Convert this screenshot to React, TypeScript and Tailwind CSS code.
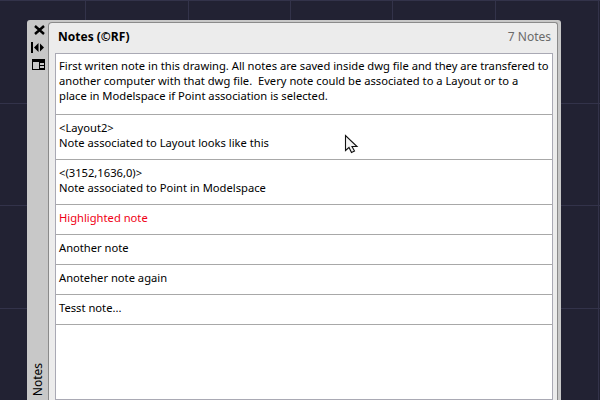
const font = { fontFamily: '"Noto Sans", sans-serif' };

function Row({ className = "text-black", children }: { className?: string; children: React.ReactNode }) {
  return <div className={`whitespace-nowrap border-b border-[#a8a8a8] pl-[3px] pr-[2px] text-[11.2px] leading-[15px] ${className}`}>{children}</div>;
}

export default function App() {
  return (
    <div className="relative h-[400px] w-[600px] overflow-hidden bg-[#222233]" style={font}>
      {["left-[85px]", "left-[188px]", "left-[290px]", "left-[392px]", "left-[495px]", "left-[598px]"].map((c) => (
        <div key={c} className={`absolute top-0 h-full w-px bg-[#33334a] ${c}`} />
      ))}
      {["top-0", "top-[103px]", "top-[205px]", "top-[308px]"].map((c) => (
        <div key={c} className={`absolute left-0 h-px w-full bg-[#33334a] ${c}`} />
      ))}
      <div className="absolute left-[27px] top-[20px] flex h-[380px] w-[534px] rounded-tl-[3px] rounded-tr-[3px] bg-[#c8c8c8] pt-[2px] pr-[3px]">
        <div className="-mt-[2px] flex w-[21px] flex-col items-center pt-[5px]">
          <svg width="13" height="10" viewBox="0 0 13 10" className="ml-[4px]"><path d="M2 1l9 8M11 1l-9 8" stroke="#000" strokeWidth="2.4" /></svg>
          <svg width="13" height="11" viewBox="0 0 13 11" className="mt-[7px] -ml-[1px]"><path d="M1 0v11" stroke="#000" strokeWidth="2" /><path d="M3 5.5l4.5-4.5v9zM13 5.5l-4-4v8z" fill="#000" /></svg>
          <svg width="13" height="11" viewBox="0 0 13 11" className="mt-[6px] ml-[1px]"><path d="M0 0h13v11H0z" fill="#000" /><path d="M1 3h6v7H1zM8 4h4v2H8zM8 7h4v2H8z" fill="#c8c8c8" /></svg>
          <div className="mt-auto mb-[4px] rotate-180 text-[12px] leading-[16px] text-black [writing-mode:vertical-rl]">Notes</div>
        </div>
        <div className="flex min-w-0 flex-1 flex-col rounded-tl-[4px] rounded-tr-[3px] border-l border-r border-t border-[#8a8a8a] bg-[#ececec] pl-[6px] pr-[4px]">
          <div className="flex h-[30px] shrink-0 items-center justify-between pb-[2px] pl-[3px] pr-[2px]">
            <span className="text-[12px] font-bold text-black">Notes (©RF)</span>
            <span className="text-[12px] text-[#6a6a6a]">7 Notes</span>
          </div>
          <div className="flex-1 border border-[#a9a9b4] bg-white">
            <Row className="h-[61px] pt-[4px] text-black">First writen note in this drawing. All notes are saved inside dwg file and they are transfered to<br />another computer with that dwg file.&nbsp; Every note could be associated to a Layout or to a<br />place in Modelspace if Point association is selected.</Row>
            <Row className="h-[45px] pt-[5px] text-black">&lt;Layout2&gt;<br />Note associated to Layout looks like this</Row>
            <Row className="h-[45px] pt-[5px] text-black">&lt;(3152,1636,0)&gt;<br />Note associated to Point in Modelspace</Row>
            <Row className="h-[30px] pt-[5px] text-[#f00014]">Highlighted note</Row>
            <Row className="h-[30px] pt-[5px] text-black">Another note</Row>
            <Row className="h-[30px] pt-[5px] text-black">Anoteher note again</Row>
            <Row className="h-[30px] pt-[5px] text-black">Tesst note...</Row>
          </div>
        </div>
      </div>
      <svg width="16" height="22" viewBox="0 0 16 22" className="absolute left-[344px] top-[134px]">
        <path d="M1.5 1.5v15l3.5-3 2.5 5 3-1.5-2.5-4.5H13z" fill="#f4f4f4" stroke="#111" strokeWidth="1.1" />
      </svg>
    </div>
  );
}
